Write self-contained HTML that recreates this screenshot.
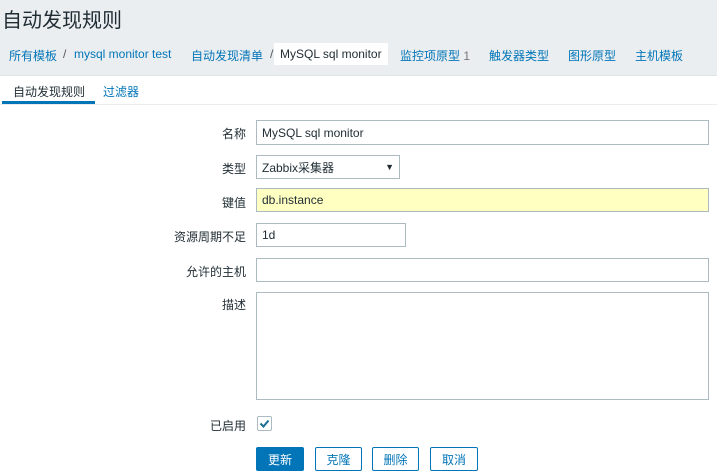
<!DOCTYPE html>
<html><head><meta charset="utf-8"><style>
*{box-sizing:border-box;margin:0;padding:0}
body{width:717px;height:476px;overflow:hidden;background:#ebeef0;font-family:"Liberation Sans","Noto Sans CJK SC",sans-serif;font-size:12px;color:#1f2c33;position:relative}
.a{position:absolute}
h1{position:absolute;left:2px;top:4px;font-size:20px;font-weight:normal;color:#1f2c33}
.nav span{position:absolute;top:47px;color:#0275b8;white-space:nowrap}
.cur{background:#fff;color:#1f2c33!important;padding:4px 6px;top:43px!important}
.main{position:absolute;left:0;top:75px;width:717px;height:401px;background:#fff;border-top:1px solid #dfe4e7}
.lbl{position:absolute;right:471px;text-align:right;white-space:nowrap}
.in{position:absolute;left:256px;border:1px solid #acbbc2;background:#fff;padding:0 5px;display:flex;align-items:center;font-size:12px}
.btn{position:absolute;top:447px;height:24px;border:1px solid #0275b8;color:#0275b8;background:#fff;border-radius:2px;display:flex;align-items:center;justify-content:center}
</style></head><body>
<h1>自动发现规则</h1>
<div class="nav">
<span style="left:9px">所有模板</span><span style="left:63px;color:#555">/</span><span style="left:74px">mysql monitor test</span>
<span style="left:191px">自动发现清单</span><span style="left:270px;color:#555">/</span>
<span class="cur" style="left:274px">MySQL sql monitor</span>
<span style="left:400px">监控项原型 <span style="position:static;color:#777">1</span></span>
<span style="left:489px">触发器类型</span><span style="left:568px">图形原型</span><span style="left:635px">主机模板</span>
</div>
<div class="main">
<div class="a" style="left:13px;top:7px;color:#1f2c33">自动发现规则</div>
<div class="a" style="left:103px;top:7px;color:#0275b8">过滤器</div>
<div class="a" style="left:2px;top:25px;width:93px;height:3px;background:#0275b8"></div>
<div class="a" style="left:0;top:28px;width:717px;height:1px;background:#ebeef0"></div>
</div>
<div class="lbl" style="top:125px">名称</div>
<div class="in" style="top:120px;width:453px;height:25px">MySQL sql monitor</div>
<div class="lbl" style="top:160px">类型</div>
<div class="in" style="top:155px;width:144px;height:24px;justify-content:space-between">Zabbix采集器<span style="font-size:9px">▼</span></div>
<div class="lbl" style="top:194px">键值</div>
<div class="in" style="top:188px;width:453px;height:24px;background:#ffffc2">db.instance</div>
<div class="lbl" style="top:228px">资源周期不足</div>
<div class="in" style="top:223px;width:150px;height:24px">1d</div>
<div class="lbl" style="top:263px">允许的主机</div>
<div class="in" style="top:258px;width:453px;height:24px"></div>
<div class="lbl" style="top:296px">描述</div>
<div class="in" style="top:292px;width:453px;height:108px"></div>
<div class="lbl" style="top:417px">已启用</div>
<div class="a" style="left:257px;top:416px;width:15px;height:15px;border:1px solid #acbbc2;border-radius:2px"><svg width="13" height="13" viewBox="0 0 13 13"><path d="M2.5 6.5l3 3 5-6" stroke="#1a6e96" stroke-width="2" fill="none"/></svg></div>
<div class="btn" style="left:256px;width:48px;background:#0275b8;color:#fff">更新</div>
<div class="btn" style="left:315px;width:47px">克隆</div>
<div class="btn" style="left:372px;width:47px">删除</div>
<div class="btn" style="left:430px;width:48px">取消</div>
</body></html>
